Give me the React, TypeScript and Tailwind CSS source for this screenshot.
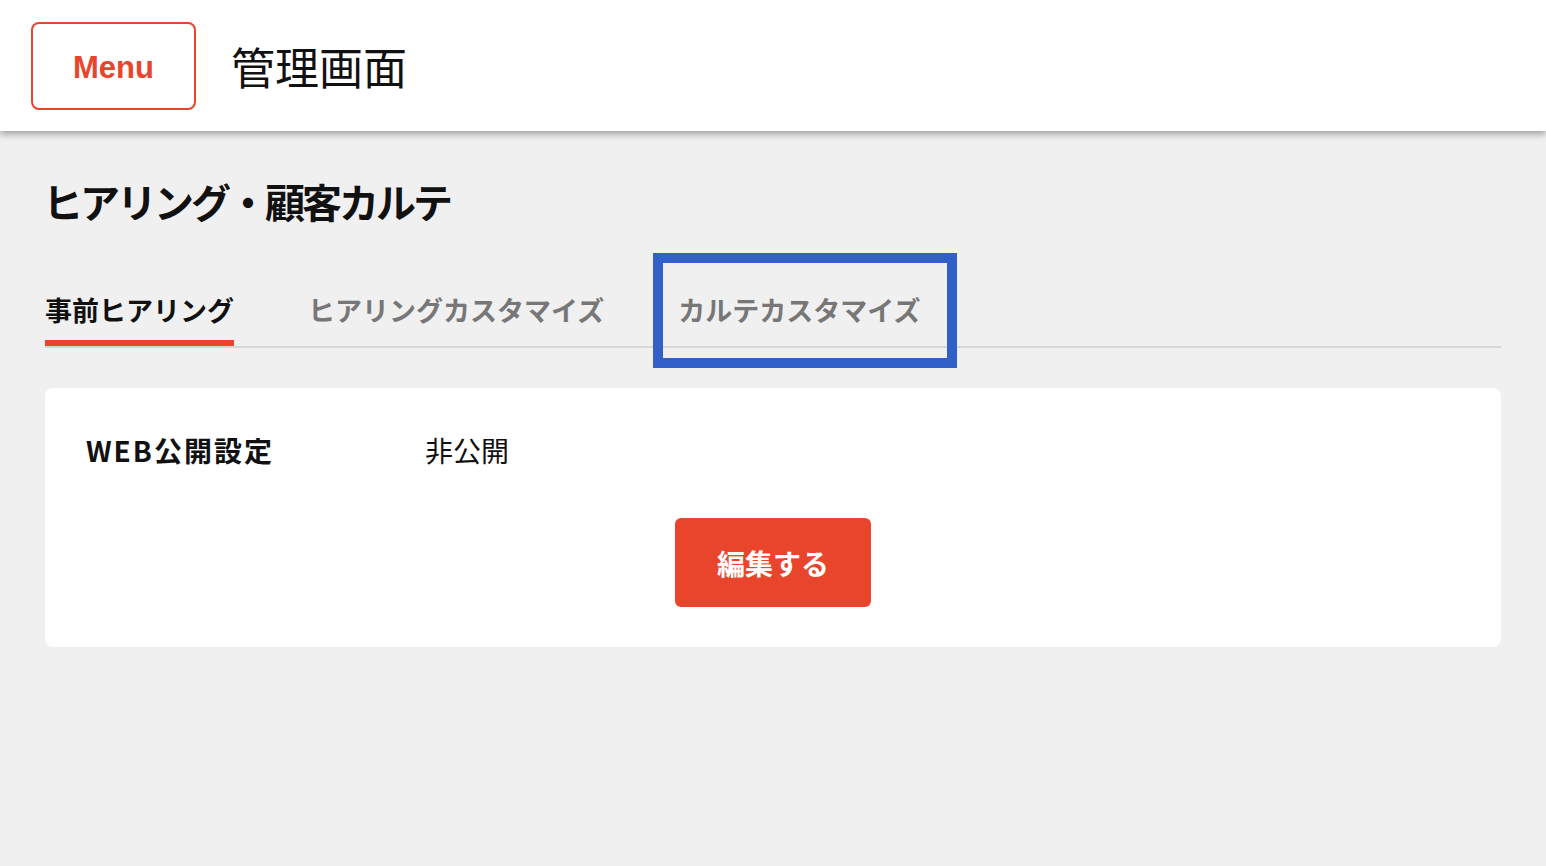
import React from 'react';

const jp = { fontFamily: '"Noto Sans CJK JP", "Noto Sans", sans-serif' };

const tabs = ['事前ヒアリング', 'ヒアリングカスタマイズ', 'カルテカスタマイズ'];

export default function App() {
  const active = 0;
  return (
    <div className="min-h-[866px] bg-[#f0f0f0]" style={jp}>
      {/* header */}
      <header className="relative z-10 flex h-[131px] items-center gap-[35px] bg-white pl-[31px] shadow-[0_3px_7px_rgba(0,0,0,0.35)]">
        <button className="flex h-[88px] w-[165px] items-center justify-center rounded-lg border-2 border-[#e8452c] bg-white pt-[5px] text-[31px] font-bold text-[#e8452c] [font-family:'Liberation_Sans',Arial,sans-serif]">
          Menu
        </button>
        <h1 className="text-[44px] leading-none text-[#111]">管理画面</h1>
      </header>

      <main className="px-[45px]">
        <h2 className="mt-[50px] -ml-[2px] text-[40px] font-bold leading-none tracking-[-3px] text-[#111]">
          ヒアリング・顧客カルテ
        </h2>

        {/* tabs */}
        <div className="mt-[75px] flex gap-[74px] border-b-2 border-[#d6d6d6]">
          {tabs.map((t, i) => (
            <div
              key={t}
              className={
                'relative border-b-[6px] pb-[17px] text-[27px] font-bold leading-none ' +
                (i === active ? 'border-[#e8452c] text-[#111]' : 'border-transparent text-[#777]')
              }
            >
              {t}
              {i === 2 && (
                <span className="pointer-events-none absolute -top-[43px] -bottom-[28px] -left-[25px] -right-[37px] border-[10px] border-[#3161c8]" />
              )}
            </div>
          ))}
        </div>

        {/* card */}
        <section className="mt-[40px] rounded-lg bg-white px-[41px] pt-[48px] pb-[40px]">
          <div className="flex items-center text-[28px] leading-none text-[#111]">
            <div className="w-[339px] font-bold tracking-[2px]">WEB公開設定</div>
            <div>非公開</div>
          </div>
          <div className="mt-[54px] flex justify-center">
            <button className="h-[89px] w-[196px] rounded-md bg-[#e8452c] text-[28px] font-bold text-white">
              編集する
            </button>
          </div>
        </section>
      </main>
    </div>
  );
}
